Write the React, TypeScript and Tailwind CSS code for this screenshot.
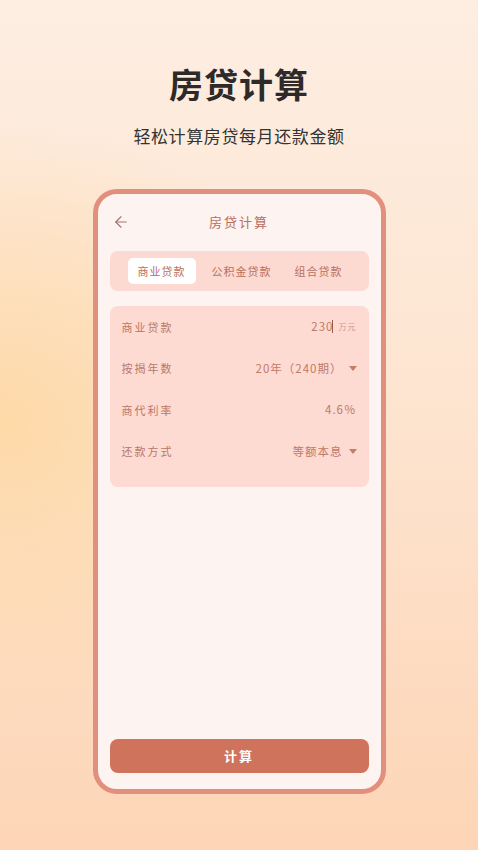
import { ArrowLeft } from "lucide-react";

const cjk = "font-['Noto_Sans_CJK_SC','Noto_Sans',sans-serif]";

const rows = [
  { label: "商业贷款", value: "230", unit: "万元", caret: false, cursor: true },
  { label: "按揭年数", value: "20年（240期）", caret: true },
  { label: "商代利率", value: "4.6％", caret: false },
  { label: "还款方式", value: "等额本息", caret: true },
];

function Caret() {
  return (
    <svg width="8" height="5" viewBox="0 0 8 5" className="ml-[6px]">
      <path d="M0 0h8L4 5z" fill="#c77b69" />
    </svg>
  );
}

export default function App() {
  return (
    <div
      className={`w-[478px] h-[850px] overflow-hidden flex flex-col items-center ${cjk} bg-[radial-gradient(ellipse_at_0%_50%,#fed9a8_0%,rgba(254,217,168,0)_50%),linear-gradient(180deg,#fdeee2_0%,#fde4cf_50%,#fdd5b6_100%)]`}
    >
      <h1 className="mt-[62px] text-[34px] leading-[44px] font-bold text-[#2d2a28] tracking-[1px]">
        房贷计算
      </h1>
      <p className="mt-[18px] text-[17px] leading-[24px] text-[#333] tracking-[0.6px]">
        轻松计算房贷每月还款金额
      </p>

      <div className="mt-[41px] w-[293px] h-[605px] rounded-[24px] border-[5px] border-[#e0907c] bg-[#fdf3f1] flex flex-col px-[12px] pb-[16px]">
        <div className="h-[56px] flex items-center relative">
          <ArrowLeft className="w-[18px] h-[18px] text-[#a0766c] ml-[2px]" strokeWidth={1.5} />
          <span className="absolute left-0 right-0 text-center text-[13px] text-[#b8705f] tracking-[2px] pointer-events-none">
            房贷计算
          </span>
        </div>

        <div className="mt-[1px] h-[40px] rounded-[8px] bg-[#fcd9d1] flex items-center px-[18px] text-[11px] tracking-[1px] text-[#b8705f]">
          <div className="w-[68px] h-[26px] rounded-[5px] bg-white flex items-center justify-center">
            商业贷款
          </div>
          <div className="ml-[13px] w-[66px] text-center">公积金贷款</div>
          <div className="ml-[16px] w-[56px] text-center">组合贷款</div>
        </div>

        <div className="mt-[15px] rounded-[8px] bg-[#fddbd3] px-[12px] pt-0 pb-[15px] flex flex-col">
          {rows.map((r) => (
            <div key={r.label} className="h-[41.5px] flex items-center justify-between">
              <span className="text-[11px] tracking-[2px] text-[#b87868]">{r.label}</span>
              <span className="flex items-center text-[11.5px] tracking-[1px] text-[#c07a68]">
                {r.value}
                {r.cursor && <span className="w-[1px] h-[13px] bg-[#9a5a4a] -ml-[2px]" />}
                {r.unit && <span className="ml-[6px] text-[8px] text-[#c99a8e]">{r.unit}</span>}
                {r.caret && <Caret />}
              </span>
            </div>
          ))}
        </div>

        <div className="flex-1" />

        <button className="h-[34px] rounded-[8px] bg-[#cf735c] text-white text-[13px] font-bold tracking-[2px]">
          计算
        </button>
      </div>
    </div>
  );
}
